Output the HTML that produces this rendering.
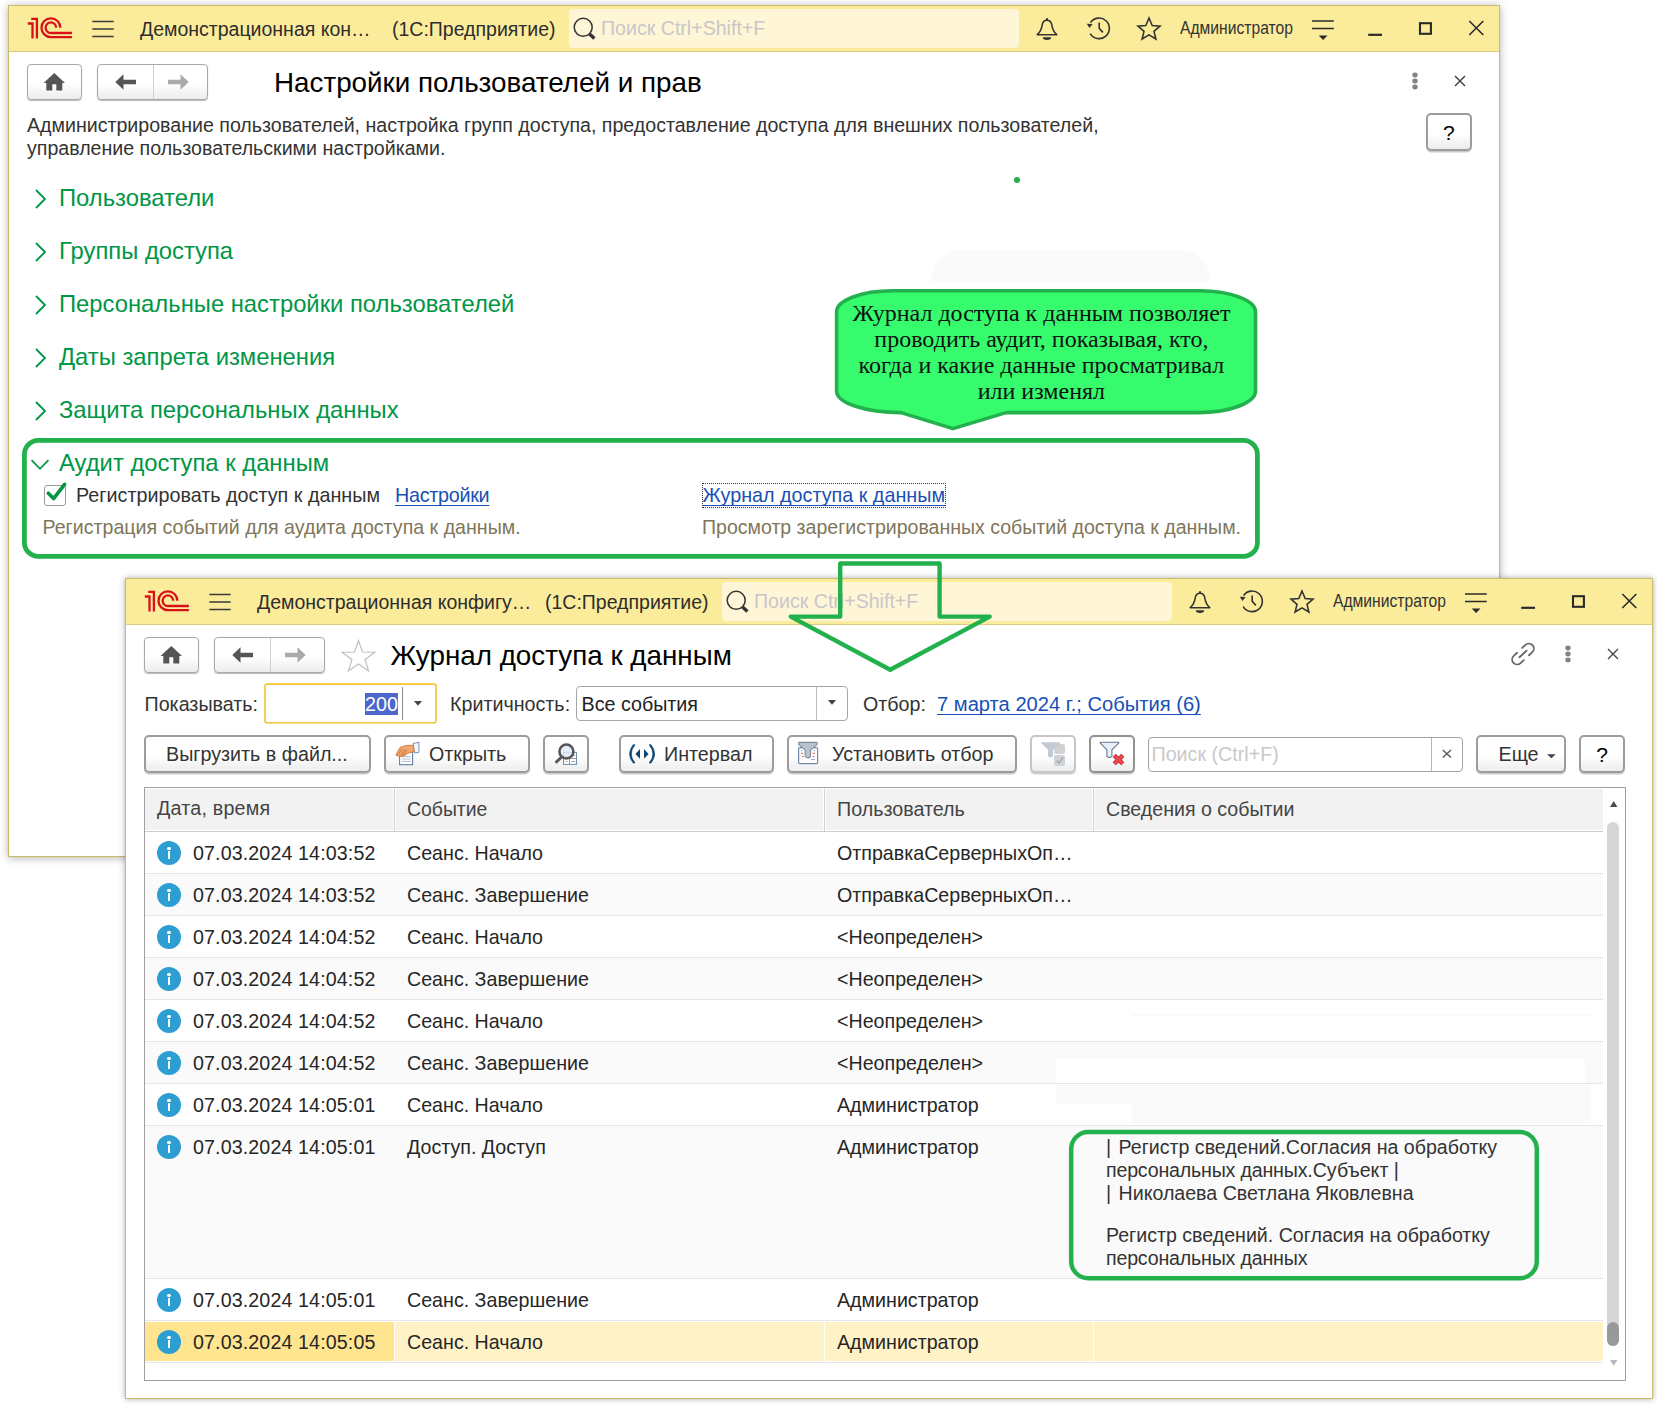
<!DOCTYPE html>
<html lang="ru">
<head>
<meta charset="utf-8">
<title>Настройки пользователей и прав</title>
<style>
*{box-sizing:border-box;margin:0;padding:0}
html,body{width:1657px;height:1413px;overflow:hidden;background:#fff}
body{position:relative;font-family:"Liberation Sans",Arial,sans-serif;color:#333;font-size:18px}
.a{position:absolute}
.t{position:absolute;white-space:nowrap;line-height:1}
.win{position:absolute;background:#fff;border:1px solid #cbbb68;box-shadow:0 1px 6px rgba(0,0,10,.30)}
.tb{position:absolute;left:0;top:0;right:0;background:#fbed9e;border-bottom:1px solid #e0cf83}
.srch{position:absolute;background:#fef6d7;border-radius:4px}
.btn{position:absolute;border:1px solid #a8a8a8;border-radius:4px;background:linear-gradient(#fff 0%,#fff 55%,#ececec 100%);box-shadow:0 1px 1px rgba(0,0,0,.28);color:#333}
.b2{border:2px solid #9c9c9c;border-radius:5px;box-shadow:0 1.500px 0 #c9c9c9}
.sec{position:absolute;white-space:nowrap;line-height:1;font-size:23.8px;color:#009646;left:59px}
.lnk{color:#1850b4;text-decoration:underline;text-decoration-skip-ink:none;text-decoration-thickness:1px;text-underline-offset:2.5px}
.g{color:#80765a}
svg{position:absolute;overflow:visible}
.row{position:absolute;left:0;width:1458px;height:42px;border-bottom:1px solid #e6e6e6}
.row .t{font-size:19.65px;color:#262626}
.row .dt{letter-spacing:0.12px}
.ic{position:absolute;left:12px;width:24px;height:24px;border-radius:12px;background:#2c9ed2}
</style>
</head>
<body>

<!-- ================= WINDOW 1 ================= -->
<div class="win" id="w1" style="left:8px;top:5px;width:1492px;height:852px;box-shadow:0 1px 8px rgba(0,0,0,.30)"></div>
<div class="a" id="w1c" style="left:0;top:0;width:1657px;height:1413px">

  <div class="a" style="left:9px;top:6px;width:1490px;height:46px;background:#fbec9c;border-bottom:1px solid #dccb80"></div>
  <svg style="left:20px;top:8px" width="60" height="40" viewBox="20 8 60 40" fill="none" stroke="#d7101a" stroke-width="2.300">
    <path d="M31.200 18.900 H36.900 V38.400"/>
    <path d="M27.800 23.500 H32.500 V38.400"/>
    <path d="M60.300 27.700 A9.400 9.400 0 1 0 50.900 37.100 H71.900"/>
    <path d="M56.200 27.700 A5.300 5.300 0 1 0 50.900 33 H71.900"/>
  </svg>
  <svg style="left:92px;top:20px" width="22" height="18" viewBox="92 20 22 18" stroke="#3a3a3a" stroke-width="1.500"><path d="M92.300 21.400H113.700M92.300 28.900H113.700M92.300 36.400H113.700"/></svg>
  <span class="t" style="left:140px;top:19.5px;font-size:19.500px;color:#2d2d2d">Демонстрационная кон…</span><span class="t" style="left:392px;top:19.500px;font-size:19.500px;color:#2d2d2d">(1С:Предприятие)</span>
  <div class="srch" style="left:569px;top:9px;width:450px;height:39px"></div>
  <svg style="left:570px;top:14px" width="28" height="28" viewBox="570 14 28 28" fill="none" stroke="#333"><circle cx="583.200" cy="27.300" r="9" stroke-width="1.500"/><path d="M589.600 34.100L594.400 38.500" stroke-width="3.400"/></svg>
  <span class="t" style="left:601px;top:19px;font-size:19.600px;color:#cac6c8">Поиск Ctrl+Shift+F</span>
  <svg style="left:1030px;top:14px" width="140" height="30" viewBox="1030 14 140 30" fill="none" stroke="#333" stroke-width="1.600" stroke-linejoin="round">
    <path d="M1037.300 34.700 C1040.800 31.500 1041.800 28 1042.300 24.500 C1042.800 21.500 1044.800 20.200 1047 20.200 C1049.200 20.200 1051.200 21.500 1051.700 24.500 C1052.200 28 1053.200 31.500 1056.700 34.700 Z"/>
    <path d="M1047 20.200 V18.300" stroke-width="2"/>
    <path d="M1042.800 37.300 H1051.200 A4.200 2.700 0 0 1 1042.800 37.300 Z" fill="#333" stroke="none"/>
    <path d="M1090.500 22.600 A10.300 10.300 0 1 1 1090.200 33.600"/>
    <path d="M1086.800 23.800 L1092.600 24 L1089.500 27.900 Z" fill="#333" stroke="none"/>
    <path d="M1099.200 22.500 V28.400 L1102.900 32.400" stroke-linejoin="miter"/>
    <path d="M1149 18 L1152.200 25.600 L1160 26.200 L1154 31.400 L1155.900 39 L1149 34.900 L1142.100 39 L1144 31.400 L1138 26.200 L1145.800 25.600 Z" stroke-linejoin="miter"/>
  </svg>
  <span class="t" style="left:1180px;top:19px;font-size:18px;transform:scaleX(0.87);transform-origin:0 0;color:#333">Администратор</span>
  <svg style="left:1310px;top:14px" width="180" height="30" viewBox="1310 14 180 30" fill="none" stroke="#2a2a2a">
    <path d="M1312 21H1333.800M1312 28.500H1333.800" stroke-width="1.500"/>
    <path d="M1318.700 35.600H1327.500L1323.100 40Z" fill="#2a2a2a" stroke="none"/>
    <path d="M1368.200 34.800H1382" stroke-width="2.200"/>
    <rect x="1420" y="23.200" width="10.900" height="10.600" stroke-width="2.100"/>
    <path d="M1469.300 21L1483.300 35M1483.300 21L1469.300 35" stroke-width="1.600"/>
  </svg>
</div>

<!-- window 1 content -->
<div class="a" id="w1b" style="left:0;top:0;width:1657px;height:1413px">

  <div class="btn" style="left:27px;top:64px;width:55px;height:36px"></div>
  <svg style="left:43px;top:72px" width="23" height="19" viewBox="0 0 23 19" fill="#555"><path d="M11.300 1 L0.600 11 H3.300 V18.500 H9.300 V12.300 H13.300 V18.500 H19.300 V11 H22 Z"/></svg>
  <div class="btn" style="left:97px;top:64px;width:111px;height:36px"></div>
  <div class="a" style="left:153px;top:65px;width:1px;height:34px;background:#cfcfcf"></div>
  <svg style="left:115px;top:74px" width="21" height="16" viewBox="0 0 21 16" fill="#555"><path d="M0.300 8 L8.500 0.300 V5.700 H21 V10.300 H8.500 V15.700 Z"/></svg>
  <svg style="left:168px;top:74px" width="21" height="16" viewBox="0 0 21 16" fill="#aaa"><path d="M20.700 8 L12.500 0.300 V5.700 H0 V10.300 H12.500 V15.700 Z"/></svg>
  <span class="t" style="left:274px;top:68.5px;font-size:27.8px;color:#000">Настройки пользователей и прав</span>
  <svg style="left:1412px;top:72px" width="6" height="18" viewBox="0 0 6 18" fill="#838383"><ellipse cx="3" cy="3" rx="2.700" ry="2.400"/><ellipse cx="3" cy="9" rx="2.700" ry="2.400"/><ellipse cx="3" cy="15" rx="2.700" ry="2.400"/></svg>
  <svg style="left:1454px;top:75px" width="12" height="12" viewBox="0 0 12 12" stroke="#444" stroke-width="1.5"><path d="M1 1L11 11M11 1L1 11"/></svg>
  <span class="t" style="left:27px;top:116px;font-size:19.6px;color:#333">Администрирование пользователей, настройка групп доступа, предоставление доступа для внешних пользователей,</span>
  <span class="t" style="left:27px;top:139px;font-size:19.6px;color:#333">управление пользовательскими настройками.</span>
  <div class="btn b2" style="left:1426px;top:113px;width:46px;height:38px"></div>
  <span class="t" style="left:1443px;top:122.300px;font-size:21px;color:#000">?</span>

  <span class="sec" style="top:186px">Пользователи</span>
  <span class="sec" style="top:239px">Группы доступа</span>
  <span class="sec" style="top:292px">Персональные настройки пользователей</span>
  <span class="sec" style="top:345px">Даты запрета изменения</span>
  <span class="sec" style="top:398px">Защита персональных данных</span>
  <span class="sec" style="top:451px">Аудит доступа к данным</span>
  <svg style="left:0;top:0" width="60" height="480" viewBox="0 0 60 480" fill="none" stroke="#009646" stroke-width="1.800">
    <path d="M36 190 L45 199 L36 208"/>
    <path d="M36 243 L45 252 L36 261"/>
    <path d="M36 296 L45 305 L36 314"/>
    <path d="M36 349 L45 358 L36 367"/>
    <path d="M36 402 L45 411 L36 420"/>
    <path d="M31.600 460.200 L40 468.800 L48.400 460.200"/>
  </svg>

  <!-- checkbox row -->
  <div class="a" style="left:44px;top:484.500px;width:22px;height:21.500px;border:1px solid #9a9a9a;border-radius:3px;background:#fff"></div>
  <svg style="left:40px;top:480px" width="30" height="30" viewBox="40 480 30 30" fill="none" stroke="#069546" stroke-width="3.600" stroke-linecap="round" stroke-linejoin="round"><path d="M48.300 493.200 L53.600 498.600 L64.600 484.300"/></svg>
  <span class="t" style="left:76px;top:486px;font-size:19.75px;color:#333">Регистрировать доступ к данным</span>
  <span class="t lnk" style="left:395px;top:486px;font-size:19.75px;letter-spacing:-0.280px">Настройки</span>
  <span class="t lnk" style="left:702.500px;top:486px;font-size:19.75px">Журнал доступа к данным</span>
  <div class="a" style="left:701.500px;top:482.500px;width:244px;height:25.500px;border:1px dotted #333"></div>
  <span class="t g" style="left:42.500px;top:517.500px;font-size:19.62px">Регистрация событий для аудита доступа к данным.</span>
  <span class="t g" style="left:702px;top:517.500px;font-size:19.55px">Просмотр зарегистрированных событий доступа к данным.</span>

  <!-- faint shape + dot -->
  <div class="a" style="left:931px;top:250px;width:279px;height:32px;background:#fafafa;border-radius:30px 30px 0 0"></div>
  <div class="a" style="left:1014px;top:177px;width:6px;height:6px;border-radius:3px;background:#22b14c"></div>

  <!-- callout -->
  <svg style="left:0;top:0" width="1657" height="700" viewBox="0 0 1657 700">
    <path d="M893 290.800 H1200 A56 21 0 0 1 1255.500 312 V391 A58 21.600 0 0 1 1198 412.600 H1006 L953 428.600 L901 412.600 A64 21.600 0 0 1 836.600 391 V312 A56 21 0 0 1 893 290.800 Z" fill="#35fb6d" stroke="#22b14c" stroke-width="3.600" stroke-linejoin="round"/>
    <rect x="24.400" y="440.400" width="1233" height="116" rx="14" ry="14" fill="none" stroke="#22b14c" stroke-width="4.800"/>
  </svg>
  <div class="a" style="left:833.400px;top:299.600px;width:416px;font-family:'Liberation Serif',serif;font-size:24px;line-height:26px;text-align:center;color:#111">Журнал доступа к данным позволяет<br>проводить аудит, показывая, кто,<br>когда и какие данные просматривал<br>или изменял</div>
</div>

<!-- ================= WINDOW 2 ================= -->
<div class="win" id="w2" style="left:125px;top:578px;width:1528px;height:821px;box-shadow:0 0 6px rgba(0,0,0,.32)"></div>
<div class="a" id="w2c" style="left:0;top:0;width:1657px;height:1413px">

  <div class="a" style="left:126px;top:579px;width:1526px;height:46px;background:#fbec9c;border-bottom:1px solid #dccb80"></div>
  <svg style="left:137px;top:581px" width="60" height="40" viewBox="20 8 60 40" fill="none" stroke="#d7101a" stroke-width="2.300">
    <path d="M31.200 18.900 H36.900 V38.400"/>
    <path d="M27.800 23.500 H32.500 V38.400"/>
    <path d="M60.300 27.700 A9.400 9.400 0 1 0 50.900 37.100 H71.900"/>
    <path d="M56.200 27.700 A5.300 5.300 0 1 0 50.900 33 H71.900"/>
  </svg>
  <svg style="left:209px;top:593px" width="22" height="18" viewBox="92 20 22 18" stroke="#3a3a3a" stroke-width="1.500"><path d="M92.300 21.400H113.700M92.300 28.900H113.700M92.300 36.400H113.700"/></svg>
  <span class="t" style="left:257px;top:592.5px;font-size:19.500px;color:#2d2d2d">Демонстрационная конфигу…</span><span class="t" style="left:545px;top:592.500px;font-size:19.500px;color:#2d2d2d">(1С:Предприятие)</span>
  <div class="srch" style="left:722px;top:582px;width:450px;height:39px"></div>
  <svg style="left:723px;top:587px" width="28" height="28" viewBox="570 14 28 28" fill="none" stroke="#333"><circle cx="583.200" cy="27.300" r="9" stroke-width="1.500"/><path d="M589.600 34.100L594.400 38.500" stroke-width="3.400"/></svg>
  <span class="t" style="left:754px;top:592px;font-size:19.600px;color:#cac6c8">Поиск Ctrl+Shift+F</span>
  <svg style="left:1183px;top:587px" width="140" height="30" viewBox="1030 14 140 30" fill="none" stroke="#333" stroke-width="1.600" stroke-linejoin="round">
    <path d="M1037.300 34.700 C1040.800 31.500 1041.800 28 1042.300 24.500 C1042.800 21.500 1044.800 20.200 1047 20.200 C1049.200 20.200 1051.200 21.500 1051.700 24.500 C1052.200 28 1053.200 31.500 1056.700 34.700 Z"/>
    <path d="M1047 20.200 V18.300" stroke-width="2"/>
    <path d="M1042.800 37.300 H1051.200 A4.200 2.700 0 0 1 1042.800 37.300 Z" fill="#333" stroke="none"/>
    <path d="M1090.500 22.600 A10.300 10.300 0 1 1 1090.200 33.600"/>
    <path d="M1086.800 23.800 L1092.600 24 L1089.500 27.900 Z" fill="#333" stroke="none"/>
    <path d="M1099.200 22.500 V28.400 L1102.900 32.400" stroke-linejoin="miter"/>
    <path d="M1149 18 L1152.200 25.600 L1160 26.200 L1154 31.400 L1155.900 39 L1149 34.900 L1142.100 39 L1144 31.400 L1138 26.200 L1145.800 25.600 Z" stroke-linejoin="miter"/>
  </svg>
  <span class="t" style="left:1333px;top:592px;font-size:18px;transform:scaleX(0.87);transform-origin:0 0;color:#333">Администратор</span>
  <svg style="left:1463px;top:587px" width="180" height="30" viewBox="1310 14 180 30" fill="none" stroke="#2a2a2a">
    <path d="M1312 21H1333.800M1312 28.500H1333.800" stroke-width="1.500"/>
    <path d="M1318.700 35.600H1327.500L1323.100 40Z" fill="#2a2a2a" stroke="none"/>
    <path d="M1368.200 34.800H1382" stroke-width="2.200"/>
    <rect x="1420" y="23.200" width="10.900" height="10.600" stroke-width="2.100"/>
    <path d="M1469.300 21L1483.300 35M1483.300 21L1469.300 35" stroke-width="1.600"/>
  </svg>
  <!-- nav row -->

  <div class="btn" style="left:144px;top:637px;width:55px;height:36px"></div>
  <svg style="left:160px;top:645px" width="23" height="19" viewBox="0 0 23 19" fill="#555"><path d="M11.300 1 L0.600 11 H3.300 V18.500 H9.300 V12.300 H13.300 V18.500 H19.300 V11 H22 Z"/></svg>
  <div class="btn" style="left:214px;top:637px;width:111px;height:36px"></div>
  <div class="a" style="left:270px;top:638px;width:1px;height:34px;background:#cfcfcf"></div>
  <svg style="left:232px;top:647px" width="21" height="16" viewBox="0 0 21 16" fill="#555"><path d="M0.300 8 L8.500 0.300 V5.700 H21 V10.300 H8.500 V15.700 Z"/></svg>
  <svg style="left:285px;top:647px" width="21" height="16" viewBox="0 0 21 16" fill="#aaa"><path d="M20.700 8 L12.500 0.300 V5.700 H0 V10.300 H12.500 V15.700 Z"/></svg>
  <svg style="left:341px;top:639px" width="36" height="34" viewBox="0 0 36 34" fill="#fff" stroke="#bdbdbd" stroke-width="1.100" stroke-linejoin="miter"><path d="M17.500 1.500 L21.500 13 L34 13.200 L24 20.500 L27.600 32 L17.500 25 L7.400 32 L11 20.500 L1 13.200 L13.500 13 Z"/></svg>
  <span class="t" style="left:390.500px;top:641.500px;font-size:27.800px;color:#000">Журнал доступа к данным</span>
  <svg style="left:1508px;top:639px" width="30" height="30" viewBox="-15 -15 30 30" fill="none" stroke="#666" stroke-width="1.800" stroke-linecap="round"><g transform="rotate(-43)"><path d="M-3.500 -5 H-8 A5 5 0 0 0 -8 5 H-3.500"/><path d="M3.500 -5 H8 A5 5 0 0 1 8 5 H3.500"/><path d="M-4.800 0 H4.800"/></g></svg>
  <svg style="left:1565px;top:645px" width="6" height="18" viewBox="0 0 6 18" fill="#838383"><ellipse cx="3" cy="3" rx="2.700" ry="2.400"/><ellipse cx="3" cy="9" rx="2.700" ry="2.400"/><ellipse cx="3" cy="15" rx="2.700" ry="2.400"/></svg>
  <svg style="left:1607px;top:648px" width="12" height="12" viewBox="0 0 12 12" stroke="#444" stroke-width="1.300"><path d="M1 1L11 11M11 1L1 11"/></svg>

  <!-- filter row -->
  <span class="t" style="left:144.500px;top:694.500px;font-size:19.700px">Показывать:</span>
  <svg style="left:260px;top:680px" width="180" height="46" viewBox="260 680 180 46"><rect x="265" y="684.100" width="171" height="38.700" rx="2" fill="#fff" stroke="#f4c330" stroke-width="1.600"/></svg>
  <div class="a" style="left:365px;top:692.500px;width:32px;height:22px;background:#4c66cc"></div><div class="a" style="left:396.500px;top:692.500px;width:1.500px;height:22px;background:#8a7a20"></div>
  <span class="t" style="left:365px;top:694.500px;font-size:19.700px;color:#fff">200</span>
  <div class="a" style="left:402px;top:687px;width:1px;height:33px;background:#8c8c8c"></div>
  <svg style="left:413.500px;top:700.500px" width="8" height="5" viewBox="0 0 8 5" fill="#444"><path d="M0 0H8L4 4.800Z"/></svg>
  <span class="t" style="left:450px;top:694.500px;font-size:19.700px">Критичность:</span>
  <div class="a" style="left:576px;top:686px;width:272px;height:35px;border:1px solid #a6a6a6;border-radius:4px;background:#fff"></div>
  <div class="a" style="left:816px;top:687px;width:1px;height:33px;background:#bdbdbd"></div>
  <span class="t" style="left:581.500px;top:694.500px;font-size:19.700px;color:#222">Все события</span>
  <svg style="left:827.500px;top:700px" width="8" height="5" viewBox="0 0 8 5" fill="#444"><path d="M0 0H8L4 4.800Z"/></svg>
  <span class="t" style="left:863px;top:694.500px;font-size:19.700px">Отбор:</span>
  <span class="t lnk" style="left:937px;top:694px;font-size:20.150px">7 марта 2024 г.; События (6)</span>
</div>

<!-- buttons row + table -->
<div class="a" id="w2d" style="left:0;top:0;width:1657px;height:1413px">
  <div class="btn b2" style="left:144px;top:735px;width:227px;height:38px"></div>
  <span class="t" style="left:166px;top:744.500px;font-size:19.700px">Выгрузить в файл...</span>
  <div class="btn b2" style="left:384px;top:735px;width:146px;height:38px"></div>
  <span class="t" style="left:429px;top:744.500px;font-size:19.700px">Открыть</span>
  <svg style="left:390px;top:738px" width="32" height="32" viewBox="390 738 32 32">
    <rect x="399.600" y="752" width="13" height="12.700" fill="#fff" stroke="#5f7fa8" stroke-width="1.100"/>
    <path d="M402 756.600H410.500M402 759H410.500M402 761.400H410.500" stroke="#a9b7c6" stroke-width="0.900"/>
    <path d="M413 743.600 L418.800 742.200 L419 752.300 L414.500 753 Z" fill="#f4f6fc" stroke="#6a86b8" stroke-width="0.900"/>
    <path d="M395.800 755.200 L400 747.500 L406 745.400 L413.300 745.400 L414.300 751.600 L408 753.200 L403.500 756.200 L399 756.200 Z" fill="#f0a870" stroke="#c8783c" stroke-width="0.900" stroke-linejoin="round"/>
    <path d="M398 754.500 L402.500 748.500 M400.500 755.500 L405 749.500 M403 755.500 L407 750" stroke="#c46a2c" stroke-width="0.800"/>
  </svg>
  <div class="btn b2" style="left:543px;top:735px;width:46px;height:38px"></div>
  <svg style="left:550px;top:740px" width="32" height="30" viewBox="550 740 32 30">
    <rect x="563.500" y="752.400" width="13" height="12" fill="#fff" stroke="#6f8ba6" stroke-width="1"/>
    <path d="M563.500 758.500H576.500M569.500 758.500V764.400M571.500 755.500H575M571.500 761.500H575M565.500 761.500H567.500" stroke="#7f99b2" stroke-width="0.900"/>
    <circle cx="566.400" cy="751.500" r="7" fill="#dde9f8" fill-opacity="0.800" stroke="#555" stroke-width="2.500"/>
    <path d="M561.300 757.200 L555.600 762.800" stroke="#555" stroke-width="3"/>
  </svg>
  <div class="btn b2" style="left:619px;top:735px;width:155px;height:38px"></div>
  <span class="t" style="left:664px;top:744.500px;font-size:19.700px">Интервал</span>
  <svg style="left:626px;top:742px" width="32" height="24" viewBox="626 742 32 24" fill="#0d4573">
    <path d="M634.900 744.800 Q627.500 754 634.900 763 L633.200 763 Q626 754 633.200 744.800 Z" stroke="#0d4573" stroke-width="0.800"/>
    <path d="M649.300 744.800 Q656.700 754 649.300 763 L651 763 Q658.200 754 651 744.800 Z" stroke="#0d4573" stroke-width="0.800"/>
    <path d="M640 749 L635.400 753.900 L640 758.800 Z"/>
    <path d="M644 749 L648.600 753.900 L644 758.800 Z"/>
  </svg>
  <div class="btn b2" style="left:787px;top:735px;width:230px;height:38px"></div>
  <span class="t" style="left:832px;top:744.500px;font-size:19.700px">Установить отбор</span>
  <svg style="left:794px;top:738px" width="30" height="30" viewBox="794 738 30 30">
    <rect x="798.600" y="747.600" width="19" height="16" rx="1.200" fill="#fbfdff" stroke="#6f8aa6" stroke-width="1.200"/>
    <path d="M801 753.300H803.300M802 756.500H803.800M812.500 753.300H814.800M812.500 756.500H814.300" stroke="#f0553c" stroke-width="1"/>
    <path d="M801 750.500H802.500M813.500 750.500H815M811 759.500H815" stroke="#7fa8dc" stroke-width="0.900"/>
    <path d="M799.300 742.400 H816.600 Q817.600 742.400 817.200 744.300 L810.500 750.200 V756.500 Q807.800 759.300 805.200 756.500 V750.200 L798.600 744.300 Q798.200 742.400 799.300 742.400 Z" fill="#b8c2cc" stroke="#7d8d9c" stroke-width="1.100" stroke-linejoin="round"/>
  </svg>
  <div class="btn b2" style="left:1030px;top:735px;width:46px;height:38px;border-color:#c6c6c6;box-shadow:0 1.500px 0 #cfcfcf"></div>
  <svg style="left:1036px;top:738px" width="32" height="32" viewBox="1036 738 32 32">
    <rect x="1054.500" y="744.500" width="10" height="9" rx="1" fill="#d2d2d2" stroke="#c6ccd4" stroke-width="0.800"/>
    <rect x="1054.500" y="755.500" width="10" height="10" rx="1" fill="#d2d2d2" stroke="#c6ccd4" stroke-width="0.800"/>
    <path d="M1056.800 760.500 L1059 763 L1063 757.300" fill="none" stroke="#93a5b8" stroke-width="1.300"/>
    <path d="M1041.200 742.200 H1059.800 Q1060.600 742.400 1059.800 743.300 L1053 749.800 V756.300 Q1050.500 758.600 1048 756.300 V749.800 L1041.200 743.300 Q1040.400 742.400 1041.200 742.200 Z" fill="#c2cad6"/>
  </svg>
  <div class="btn b2" style="left:1089px;top:735px;width:46px;height:38px;border-color:#929292"></div>
  <svg style="left:1095px;top:738px" width="32" height="32" viewBox="1095 738 32 32">
    <path d="M1100.600 742.300 H1118.400 Q1119.300 742.500 1118.400 743.400 L1111.900 749.800 V756.300 Q1109.400 758.600 1106.900 756.300 V749.800 L1100.600 743.400 Q1099.700 742.500 1100.600 742.300 Z" fill="#e6eef8" stroke="#66788e" stroke-width="1.100" stroke-linejoin="round"/>
    <path d="M1114.200 755.400 L1122.800 763.800 M1122.800 755.400 L1114.200 763.800" stroke="#c4202a" stroke-width="4.300"/>
    <path d="M1114.200 755.400 L1122.800 763.800 M1122.800 755.400 L1114.200 763.800" stroke="#ef4a52" stroke-width="2.600"/>
  </svg>
  <div class="a" style="left:1148px;top:737px;width:315px;height:35px;border:1px solid #a2a2a2;border-radius:4px;background:#fff"></div>
  <div class="a" style="left:1431px;top:738px;width:1px;height:33px;background:#b5b5b5"></div>
  <span class="t" style="left:1151.500px;top:745px;font-size:19.700px;color:#c9c9c9">Поиск (Ctrl+F)</span>
  <svg style="left:1442px;top:749px" width="10" height="10" viewBox="0 0 10 10" stroke="#555" stroke-width="1.300"><path d="M0.800 1L9 8.600M9 1L0.800 8.600"/></svg>
  <div class="btn b2" style="left:1476px;top:735px;width:90px;height:38px"></div>
  <span class="t" style="left:1498.500px;top:744.500px;font-size:19.700px">Еще</span>
  <svg style="left:1546.800px;top:754px" width="9" height="5" viewBox="0 0 9 5" fill="#444"><path d="M0 0.300H8.800L4.400 4.300Z"/></svg>
  <div class="btn b2" style="left:1579px;top:735px;width:46px;height:38px"></div>
  <span class="t" style="left:1596.300px;top:743.800px;font-size:21px;color:#000">?</span>

  <!-- table -->
  <div class="a" style="left:144px;top:787px;width:1482px;height:594px;border:1px solid #a0a0a0;background:#fff"></div>
  <div class="a" style="left:145px;top:789px;width:1458px;height:41px;background:#f2f2f2"></div><div class="a" style="left:145px;top:831px;width:1458px;height:1px;background:#cdcdcd"></div>
  <div class="a" style="left:393px;top:789px;width:3px;height:42px;background:#fff"></div><div class="a" style="left:394px;top:789px;width:1px;height:42px;background:#cfcfcf"></div>
  <div class="a" style="left:823px;top:789px;width:3px;height:42px;background:#fff"></div><div class="a" style="left:824px;top:789px;width:1px;height:42px;background:#cfcfcf"></div>
  <div class="a" style="left:1092px;top:789px;width:3px;height:42px;background:#fff"></div><div class="a" style="left:1093px;top:789px;width:1px;height:42px;background:#cfcfcf"></div>
  <span class="t" style="left:157px;top:799.400px;font-size:19.700px;letter-spacing:0.200px;color:#444">Дата, время</span>
  <span class="t" style="left:407px;top:800px;font-size:19.400px;color:#444">Событие</span>
  <span class="t" style="left:837px;top:800px;font-size:19.700px;color:#444">Пользователь</span>
  <span class="t" style="left:1106px;top:800px;font-size:19.600px;color:#444">Сведения о событии</span>
  <div class="a" id="rows" style="left:145px;top:0;width:1458px;height:1380px">
  <div class="row" style="top:832px;height:42px;background:#fff"><div class="ic" style="top:9px"></div><div class="a" style="left:22.700px;top:19px;width:2.700px;height:8px;background:#fff"></div><div class="a" style="left:22.400px;top:14.800px;width:3.300px;height:3.300px;border-radius:2px;background:#fff"></div><span class="t dt" style="left:48px;top:11.800px">07.03.2024 14:03:52</span><span class="t" style="left:262px;top:11.800px">Сеанс. Начало</span><span class="t" style="left:692px;top:11.800px">ОтправкаСерверныхОп…</span></div>
  <div class="row" style="top:874px;height:42px;background:#fafafa"><div class="ic" style="top:9px"></div><div class="a" style="left:22.700px;top:19px;width:2.700px;height:8px;background:#fff"></div><div class="a" style="left:22.400px;top:14.800px;width:3.300px;height:3.300px;border-radius:2px;background:#fff"></div><span class="t dt" style="left:48px;top:11.800px">07.03.2024 14:03:52</span><span class="t" style="left:262px;top:11.800px">Сеанс. Завершение</span><span class="t" style="left:692px;top:11.800px">ОтправкаСерверныхОп…</span></div>
  <div class="row" style="top:916px;height:42px;background:#fff"><div class="ic" style="top:9px"></div><div class="a" style="left:22.700px;top:19px;width:2.700px;height:8px;background:#fff"></div><div class="a" style="left:22.400px;top:14.800px;width:3.300px;height:3.300px;border-radius:2px;background:#fff"></div><span class="t dt" style="left:48px;top:11.800px">07.03.2024 14:04:52</span><span class="t" style="left:262px;top:11.800px">Сеанс. Начало</span><span class="t" style="left:692px;top:11.800px">&lt;Неопределен&gt;</span></div>
  <div class="row" style="top:958px;height:42px;background:#fafafa"><div class="ic" style="top:9px"></div><div class="a" style="left:22.700px;top:19px;width:2.700px;height:8px;background:#fff"></div><div class="a" style="left:22.400px;top:14.800px;width:3.300px;height:3.300px;border-radius:2px;background:#fff"></div><span class="t dt" style="left:48px;top:11.800px">07.03.2024 14:04:52</span><span class="t" style="left:262px;top:11.800px">Сеанс. Завершение</span><span class="t" style="left:692px;top:11.800px">&lt;Неопределен&gt;</span></div>
  <div class="row" style="top:1000px;height:42px;background:#fff"><div class="ic" style="top:9px"></div><div class="a" style="left:22.700px;top:19px;width:2.700px;height:8px;background:#fff"></div><div class="a" style="left:22.400px;top:14.800px;width:3.300px;height:3.300px;border-radius:2px;background:#fff"></div><span class="t dt" style="left:48px;top:11.800px">07.03.2024 14:04:52</span><span class="t" style="left:262px;top:11.800px">Сеанс. Начало</span><span class="t" style="left:692px;top:11.800px">&lt;Неопределен&gt;</span></div>
  <div class="row" style="top:1042px;height:42px;background:#fafafa"><div class="ic" style="top:9px"></div><div class="a" style="left:22.700px;top:19px;width:2.700px;height:8px;background:#fff"></div><div class="a" style="left:22.400px;top:14.800px;width:3.300px;height:3.300px;border-radius:2px;background:#fff"></div><span class="t dt" style="left:48px;top:11.800px">07.03.2024 14:04:52</span><span class="t" style="left:262px;top:11.800px">Сеанс. Завершение</span><span class="t" style="left:692px;top:11.800px">&lt;Неопределен&gt;</span></div>
  <div class="row" style="top:1084px;height:42px;background:#fff"><div class="ic" style="top:9px"></div><div class="a" style="left:22.700px;top:19px;width:2.700px;height:8px;background:#fff"></div><div class="a" style="left:22.400px;top:14.800px;width:3.300px;height:3.300px;border-radius:2px;background:#fff"></div><span class="t dt" style="left:48px;top:11.800px">07.03.2024 14:05:01</span><span class="t" style="left:262px;top:11.800px">Сеанс. Начало</span><span class="t" style="left:692px;top:11.800px">Администратор</span></div>
  <div class="row" style="top:1126px;height:153px;background:#fafafa"><div class="ic" style="top:9px"></div><div class="a" style="left:22.700px;top:19px;width:2.700px;height:8px;background:#fff"></div><div class="a" style="left:22.400px;top:14.800px;width:3.300px;height:3.300px;border-radius:2px;background:#fff"></div><span class="t dt" style="left:48px;top:11.800px">07.03.2024 14:05:01</span><span class="t" style="left:262px;top:11.800px">Доступ. Доступ</span><span class="t" style="left:692px;top:11.800px">Администратор</span></div>
  <div class="row" style="top:1279px;height:42px;background:#fff"><div class="ic" style="top:9px"></div><div class="a" style="left:22.700px;top:19px;width:2.700px;height:8px;background:#fff"></div><div class="a" style="left:22.400px;top:14.800px;width:3.300px;height:3.300px;border-radius:2px;background:#fff"></div><span class="t dt" style="left:48px;top:11.800px">07.03.2024 14:05:01</span><span class="t" style="left:262px;top:11.800px">Сеанс. Завершение</span><span class="t" style="left:692px;top:11.800px">Администратор</span></div>
  <div class="row" style="top:1321px;height:42px;background:#fff"><div class="a" style="left:0;top:1px;width:1458px;height:39px;background:#fff2c6"></div><div class="a" style="left:0;top:1px;width:249px;height:39px;background:#ffe590"></div><div class="a" style="left:249px;top:0;width:1px;height:40px;background:#fff"></div><div class="a" style="left:679px;top:0;width:1px;height:40px;background:#fff"></div><div class="a" style="left:948px;top:0;width:1px;height:40px;background:#fff"></div><div class="ic" style="top:9px"></div><div class="a" style="left:22.700px;top:19px;width:2.700px;height:8px;background:#fff"></div><div class="a" style="left:22.400px;top:14.800px;width:3.300px;height:3.300px;border-radius:2px;background:#fff"></div><span class="t dt" style="left:48px;top:11.800px">07.03.2024 14:05:05</span><span class="t" style="left:262px;top:11.800px">Сеанс. Начало</span><span class="t" style="left:692px;top:11.800px">Администратор</span></div>
  </div>
  <!-- faint erased patches -->
  <div class="a" style="left:1132px;top:1014px;width:459px;height:2px;background:#fafafa"></div>
  <div class="a" style="left:1056px;top:1059px;width:529px;height:24px;background:#fff"></div>
  <div class="a" style="left:1056px;top:1085px;width:535px;height:19px;background:#fafafa"></div>
  <div class="a" style="left:1132px;top:1104px;width:459px;height:19px;background:#fafafa"></div>
  <!-- event info -->
  <div class="a" style="left:1106px;top:1136px;font-size:19.600px;line-height:23px;color:#333;white-space:nowrap"><span style="margin-right:2px">|</span> Регистр сведений.Согласия на обработку<br><span style="letter-spacing:-0.180px">персональных данных</span>.Субъект |<br><span style="margin-right:2px">|</span> Николаева Светлана Яковлевна</div>
  <div class="a" style="left:1106px;top:1224px;font-size:19.600px;line-height:23px;color:#333;white-space:nowrap">Регистр сведений. Согласия на обработку<br><span style="letter-spacing:-0.180px">персональных данных</span></div>
  <!-- scrollbar -->
  <div class="a" style="left:1603px;top:789px;width:22px;height:591px;background:#fff"></div>
  <svg style="left:1610px;top:801px" width="8" height="6" viewBox="0 0 8 6" fill="#4a4a4a"><path d="M0 6H7.400L3.700 0Z"/></svg>
  <svg style="left:1610px;top:1360px" width="8" height="6" viewBox="0 0 8 6" fill="#b8b8b8"><path d="M0 0H7.400L3.700 5.800Z"/></svg>
  <div class="a" style="left:1607px;top:822px;width:12px;height:524px;border-radius:6px;background:#d6d6d6"></div>
  <div class="a" style="left:1607px;top:1322px;width:12px;height:24px;border-radius:6px;background:#999"></div>

  <!-- green annotations over window 2 -->
  <svg style="left:0;top:0" width="1657" height="1413" viewBox="0 0 1657 1413" fill="none" stroke="#22b14c" stroke-width="4">
    <rect x="1071.200" y="1132" width="465.600" height="146.200" rx="17" ry="17" stroke-width="4.500"/>
    <path d="M840.200 563.500 H939.600 V616.600 H989.700 L890.200 669.800 L790.700 616.600 H840.200 Z" stroke-width="4.400" stroke-linejoin="round"/>
  </svg>
</div>

</body>
</html>
